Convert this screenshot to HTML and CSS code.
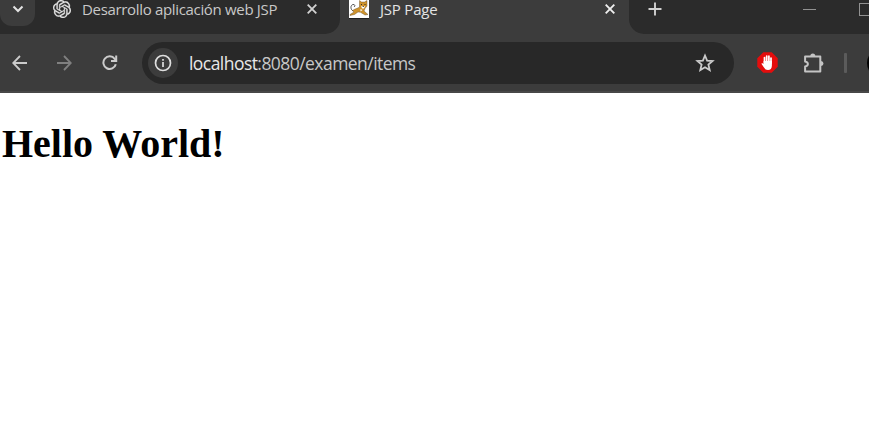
FILE: index.html
```html
<!DOCTYPE html>
<html lang="es">
<head>
<meta charset="utf-8">
<title>JSP Page</title>
<link rel="stylesheet" href="styles.css">
</head>
<body>
<header class="browser">
  <div class="tabstrip">
    <div class="inactive-area left">
      <div class="tab-search"><svg width="12" height="8" viewBox="0 0 12 8"><path d="M1.500 1.500 6 6l4.500-4.500" fill="none" stroke="#e3e3e3" stroke-width="2"/></svg></div>
      <svg class="gpt" width="18" height="18" viewBox="0 0 24 24" fill="#e6e6e6" stroke="#e6e6e6" stroke-width=".4"><path d="M22.2819 9.8211a5.9847 5.9847 0 0 0-.5157-4.9108 6.0462 6.0462 0 0 0-6.5098-2.9A6.0651 6.0651 0 0 0 4.9807 4.1818a5.9847 5.9847 0 0 0-3.9977 2.9 6.0462 6.0462 0 0 0 .7427 7.0966 5.98 5.98 0 0 0 .511 4.9107 6.051 6.051 0 0 0 6.5146 2.9001A5.9847 5.9847 0 0 0 13.2599 24a6.0557 6.0557 0 0 0 5.7718-4.2058 5.9894 5.9894 0 0 0 3.9977-2.9001 6.0557 6.0557 0 0 0-.7475-7.0729zm-9.022 12.6081a4.4755 4.4755 0 0 1-2.8764-1.0408l.1419-.0804 4.7783-2.7582a.7948.7948 0 0 0 .3927-.6813v-6.7369l2.02 1.1686a.071.071 0 0 1 .038.052v5.5826a4.504 4.504 0 0 1-4.4945 4.4944zm-9.6607-4.1254a4.4708 4.4708 0 0 1-.5346-3.0137l.142.0852 4.783 2.7582a.7712.7712 0 0 0 .7806 0l5.8428-3.3685v2.3324a.0804.0804 0 0 1-.0332.0615L9.74 19.9502a4.4992 4.4992 0 0 1-6.1408-1.6464zM2.3408 7.8956a4.485 4.485 0 0 1 2.3655-1.9728V11.6a.7664.7664 0 0 0 .3879.6765l5.8144 3.3543-2.0201 1.1685a.0757.0757 0 0 1-.071 0l-4.8303-2.7865A4.504 4.504 0 0 1 2.3408 7.872zm16.5963 3.8558L13.1038 8.364 15.1192 7.2a.0757.0757 0 0 1 .071 0l4.8303 2.7913a4.4944 4.4944 0 0 1-.6765 8.1042v-5.6772a.79.79 0 0 0-.407-.667zm2.0107-3.0231l-.142-.0852-4.7735-2.7818a.7759.7759 0 0 0-.7854 0L9.409 9.2297V6.8974a.0662.0662 0 0 1 .0284-.0615l4.8303-2.7866a4.4992 4.4992 0 0 1 6.6802 4.66zM8.3065 12.863l-2.02-1.1638a.0804.0804 0 0 1-.038-.0567V6.0742a4.4992 4.4992 0 0 1 7.3757-3.4537l-.142.0805L8.704 5.459a.7948.7948 0 0 0-.3927.6813zm1.0976-2.3654l2.602-1.4998 2.6069 1.4998v2.9994l-2.5974 1.4997-2.6067-1.4997Z"/></svg>
      <span class="tab-title long">Desarrollo aplicación web JSP</span>
      <svg class="close" width="10" height="10" viewBox="0 0 10 10"><path d="M.7.7l8.600 8.600M9.300.7.7 9.300" stroke="#d2d2d2" stroke-width="1.800"/></svg>
    </div>
    <div class="tab-active">
      <svg class="tomcat" width="20" height="19" viewBox="0 0 20 19">
        <path fill="#fff" d="M0 0h20v18H0z"/><path fill="#202020" d="M0 18h20v1H0z"/>
        <path d="M4 11C1 9 1.500 5 4 4.500c2-.3 2.500 1.500 1 2.500" fill="none" stroke="#555" stroke-width="1"/>
        <path fill="#cf932c" stroke="#5a4526" stroke-width=".4" d="M3.500 10.500c3-2 5-2 7-3.500L10.500.5l2 1.500h3L18 .5v5.500L16 8.500l-1 2.500 4 3.500-3 .5-4.500-2.700-2.500-.3-3.500 2.500-4.500 1v-1l4-2.500z"/>
        <path fill="#fff" d="m12 6 2 .5 2-.5-1 2.500h-2zM11.500 9l2 1-2 1.500z"/><path fill="#333" d="M12 4h1v1h-1zM15.500 4h1v1h-1zM13.800 6h1v1h-1z"/>
      </svg>
      <span class="tab-title short">JSP Page</span>
      <svg class="close" width="10" height="10" viewBox="0 0 10 10"><path d="M.7.7l8.600 8.600M9.300.7.7 9.300" stroke="#eee" stroke-width="1.900"/></svg>
    </div>
    <div class="inactive-area right">
      <svg class="plus" width="14" height="14" viewBox="0 0 14 14"><path d="M7 .5v13M.5 7h13" stroke="#d0d0d0" stroke-width="1.900"/></svg>
      <span class="minimize"></span>
      <span class="maximize"></span>
    </div>
  </div>
  <div class="toolbar">
    <svg class="back" width="16" height="16" viewBox="0 0 16 16"><path d="M15 8H1.500M8 1 1.200 8 8 15" fill="none" stroke="#cbcbcb" stroke-width="1.800"/></svg>
    <svg class="forward" width="16" height="16" viewBox="0 0 16 16"><path d="M1 8h13.500M8 1l6.800 7L8 15" fill="none" stroke="#808080" stroke-width="1.800"/></svg>
    <svg class="reload" width="16" height="16" viewBox="0 0 16 16"><path d="M13.800 9.200A6.300 6.300 0 1 1 12.700 3.800L14 5.400" fill="none" stroke="#cbcbcb" stroke-width="2"/><path d="M14.200.5v5.400H9" fill="none" stroke="#cbcbcb" stroke-width="2"/></svg>
    <div class="omnibox">
      <span class="site-info"><svg width="18" height="18" viewBox="0 0 18 18"><circle cx="9" cy="9" r="7.500" fill="none" stroke="#dedede" stroke-width="1.700"/><path d="M9 8v5M9 5v1.800" stroke="#dedede" stroke-width="1.700"/></svg></span>
      <span class="url"><span class="host">localhost</span>:8080/examen/items</span>
      <svg class="star" width="20" height="20" viewBox="0 0 20 20"><path d="m10 2.500 2.100 5.100 5.500.45-4.200 3.600 1.300 5.400L10 14.200l-4.700 2.850 1.300-5.400-4.200-3.600 5.500-.45z" fill="none" stroke="#cbcbcb" stroke-width="1.800"/></svg>
    </div>
    <svg class="adblock" width="21" height="21" viewBox="0 0 21 21"><path fill="#e40d0d" d="M6.300.3h8.400l6 6v8.400l-6 6H6.300l-6-6V6.300z"/><path fill="none" stroke="#fff" stroke-width="1.750" stroke-linecap="round" d="M7.500 11V5.500M9.700 10V4M11.900 10V4.200M14 11V6"/><path fill="#fff" d="M6.600 9h8.300v4.500c0 3-1.600 4.500-3.900 4.500-2 0-3-.8-4-2.500l-2.600-3.700c.8-1 1.700-.4 2.200.3z"/></svg>
    <svg class="puzzle" width="22" height="22" viewBox="0 0 22 22"><path d="M2.100 4.500h15.200v15H2.100v-5c3.700-.7 3.700-4.200 0-5z" fill="none" stroke="#c4c4c4" stroke-width="2" stroke-linejoin="round"/><path d="M7.300 4.300a2.500 2.800 0 0 1 5 0zM18 9a2.500 2.500 0 0 1 0 5z" fill="#c4c4c4"/></svg>
    <span class="divider"></span>
    <span class="avatar"></span>
  </div>
</header>
<main><h1>Hello World!</h1></main>
</body>
</html>
```
FILE: styles.css
```css
* { box-sizing: border-box; }
body { margin: 0; background: #fff; overflow: hidden; }
svg { display: block; flex: none; }
.browser { width: 869px; overflow: hidden; background: #3c3c3c; border-bottom: 2px solid #484848; font-family: "Open Sans", "Noto Sans", sans-serif; }
.tabstrip { display: flex; height: 34px; align-items: flex-start; background: #3c3c3c; }
.inactive-area { display: flex; height: 34px; background: #2b2b2b; flex: none; }
.left { width: 340px; border-bottom-right-radius: 15px; }
.right { width: 240px; border-bottom-left-radius: 15px; overflow: hidden; }
.tab-search { width: 35px; height: 26px; padding: 5px 0 0 12px; background: #3c3c3c; border-radius: 0 0 12px 12px; flex: none; }
.gpt { margin-left: 18px; }
.tab-title { line-height: 18px; white-space: nowrap; flex: none; }
.long { width: 225px; margin-left: 11px; font-size: 15px; letter-spacing: -0.33px; color: #c8c8c8; }
.close { margin-top: 4px; }
.tab-active { display: flex; width: 289px; height: 34px; flex: none; }
.tomcat { margin-left: 9px; }
.short { width: 225px; margin-left: 11px; font-size: 15px; letter-spacing: -0.2px; color: #e4e4e4; }
.plus { margin: 2px 0 0 19px; }
.minimize { width: 13px; height: 1px; margin: 9px 0 0 141px; background: #929292; flex: none; }
.maximize { width: 13px; height: 13px; margin: 3px 0 0 43px; border: 1px solid #929292; flex: none; }
.toolbar { display: flex; height: 57px; align-items: center; overflow: hidden; }
.back { margin-left: 12px; }
.forward { margin-left: 28px; }
.reload { margin-left: 30px; }
.omnibox { display: flex; align-items: center; width: 592px; height: 42px; margin-left: 24px; padding: 0 19px 0 6px; border-radius: 21px; background: #282828; flex: none; }
.site-info { display: flex; align-items: center; justify-content: center; width: 30px; height: 30px; border-radius: 50%; background: #3c3c3c; }
.url { margin-left: 11px; padding-top: 1px; font-size: 17.5px; line-height: 24px; letter-spacing: -0.55px; color: #c7c7c7; }
.host { color: #e8e8e8; }
.star { margin-left: auto; }
.adblock { margin-left: 23px; }
.puzzle { margin-left: 25px; }
.divider { width: 3px; height: 20px; margin-left: 19px; background: #5b5b5b; border-radius: 1px; flex: none; }
.avatar { width: 30px; height: 30px; margin-left: 20px; border-radius: 50%; background: #000; flex: none; }
main { padding: 28px 0 0 2px; }
h1 { margin: 0; font: bold 40px/46px "Liberation Serif", serif; color: #000; }
```
